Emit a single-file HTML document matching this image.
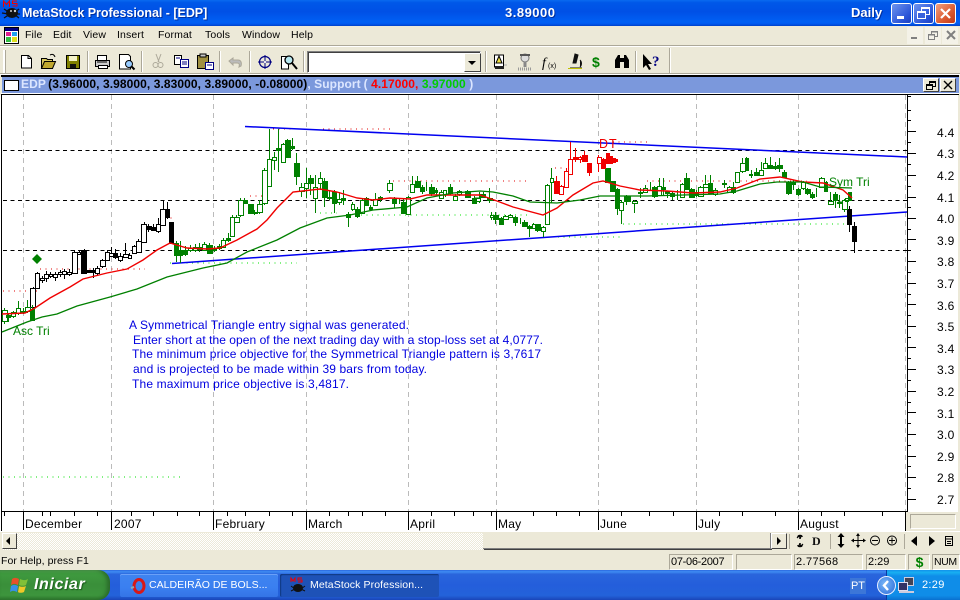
<!DOCTYPE html>
<html><head><meta charset="utf-8"><style>
html,body{margin:0;padding:0;width:960px;height:600px;overflow:hidden;background:#ece9d8;font-family:"Liberation Sans",sans-serif;font-size:11px;color:#000}
.a{position:absolute;white-space:nowrap}
.sep{position:absolute;top:51px;width:1px;height:21px;background:#aca899;border-right:1px solid #fff}
.pane{position:absolute;top:554px;height:14px;border:1px solid;border-color:#aca899 #fff #fff #aca899;line-height:14px;font-size:11px;padding-left:1px;box-sizing:content-box}
.m{position:absolute;top:29px;font-size:10.5px;line-height:13px;letter-spacing:.12px}
svg{position:absolute;overflow:visible}
.lbl{font:12px "Liberation Sans",sans-serif;fill:#000}
</style></head><body>

<!-- title bar -->
<div class="a" style="left:0;top:0;width:960px;height:26px;background:linear-gradient(180deg,#0a6af0 0,#0058e8 10%,#0050e6 45%,#0060f4 85%,#0058ee 92%,#0040c8 100%)"></div>
<svg style="left:2px;top:0" width="18" height="20" viewBox="0 0 18 20"><ellipse cx="10" cy="13" rx="6" ry="5" fill="#111"/><path d="M2 9l6 4M0 13l7 1M2 18l6-4M17 9l-5 4M18 14l-5 0M17 18l-5-4" stroke="#111" fill="none" stroke-width="1.300"/><path d="M1.500 7V1l3 3.500L7.500 1v6M15 1H10.500v2.500H15V6H10.500" stroke="#e00" fill="none"/><circle cx="13" cy="11" r="1.200" fill="#ccc"/><circle cx="9" cy="11" r="1" fill="#ccc"/></svg>
<div class="a" style="left:22px;top:5px;color:#fff;font:bold 12.500px/16px 'Liberation Sans',sans-serif;text-shadow:1px 1px 0 #0030a0;letter-spacing:-.03px">MetaStock Professional - [EDP]</div>
<div class="a" style="left:505px;top:5px;color:#fff;font:bold 13px/16px 'Liberation Sans',sans-serif;text-shadow:1px 1px 0 #0030a0;letter-spacing:.5px">3.89000</div>
<div class="a" style="left:851px;top:5px;color:#fff;font:bold 13px/16px 'Liberation Sans',sans-serif;text-shadow:1px 1px 0 #0030a0">Daily</div>
<div class="a" style="left:891px;top:3px;width:19px;height:19px;border:1px solid #fff;border-radius:3px;background:linear-gradient(135deg,#6f94ee,#2a55d8 70%,#1c3fc0)"><div class="a" style="left:5px;top:12px;width:7px;height:3px;background:#fff"></div></div>
<div class="a" style="left:913px;top:3px;width:19px;height:19px;border:1px solid #fff;border-radius:3px;background:linear-gradient(135deg,#6f94ee,#2a55d8 70%,#1c3fc0)"><div class="a" style="left:7px;top:3px;width:7px;height:5px;border:1px solid #fff;border-top-width:2px"></div><div class="a" style="left:3px;top:7px;width:7px;height:5px;border:1px solid #fff;border-top-width:2px;background:#3a62dc"></div></div>
<div class="a" style="left:935px;top:3px;width:19px;height:19px;border:1px solid #fff;border-radius:3px;background:linear-gradient(135deg,#f0a080,#dc5a30 60%,#c03818)"><svg style="left:4px;top:4px" width="11" height="11"><path d="M1 1l9 9M10 1l-9 9" stroke="#fff" stroke-width="2.200"/></svg></div>

<!-- menu -->
<svg style="left:4px;top:27px" width="15" height="17"><rect x=".5" y=".5" width="14" height="16" fill="#fff" stroke="#000"/><rect x="1" y="1" width="13" height="3" fill="#000080"/><rect x="2" y="5" width="5" height="4" fill="#e02090"/><rect x="8" y="5" width="5" height="4" fill="#20a0f0"/><rect x="2" y="10" width="5" height="5" fill="#30c040"/><rect x="8" y="10" width="5" height="5" fill="#e0e020"/></svg>
<div class="m" style="left:25px">File</div><div class="m" style="left:53px">Edit</div><div class="m" style="left:83px">View</div><div class="m" style="left:117px">Insert</div><div class="m" style="left:158px">Format</div><div class="m" style="left:205px">Tools</div><div class="m" style="left:242px">Window</div><div class="m" style="left:291px">Help</div>
<div class="a" style="left:907px;top:27px;width:16px;height:17px;background:#f4f2e8"></div><div class="a" style="left:925px;top:27px;width:16px;height:17px;background:#f4f2e8"></div><div class="a" style="left:942px;top:27px;width:16px;height:17px;background:#f4f2e8"></div>
<svg style="left:0;top:0" width="960" height="50" viewBox="0 0 960 50" fill="none" stroke="#808080" shape-rendering="crispEdges"><path d="M911 38h6" stroke-width="2"/><rect x="931.500" y="31.500" width="6" height="5"/><path d="M931 32h7"/><rect x="928.500" y="34.500" width="6" height="5" fill="#f4f2e8"/><path d="M928 35h7"/><path d="M947 31l8 8M955 31l-8 8" stroke-width="2" shape-rendering="auto"/></svg>
<div class="a" style="left:0;top:45px;width:960px;height:1px;background:#aca899"></div><div class="a" style="left:0;top:46px;width:960px;height:1px;background:#fff"></div>

<!-- toolbar -->
<div class="a" style="left:3px;top:50px;width:2px;height:23px;background:#fff;border-right:1px solid #aca899"></div>
<div class="sep" style="left:87px"></div><div class="sep" style="left:141px"></div><div class="sep" style="left:219px"></div><div class="sep" style="left:249px"></div><div class="sep" style="left:303px"></div><div class="sep" style="left:485px"></div><div class="sep" style="left:635px"></div><div class="a" style="left:669px;top:48px;width:1px;height:26px;background:#aca899;border-right:1px solid #fff"></div>
<svg style="left:0;top:47px" width="700" height="27" viewBox="0 47 700 27">
<path d="M21.500 55.500h7l3 3v9.500h-10z" fill="#fff" stroke="#000"/><path d="M28 55.500v3h3" fill="none" stroke="#000"/>
<path d="M41.500 68.500v-10h5l1 1h5v9z" fill="#d8c860" stroke="#000"/><path d="M41.500 68.500l3-7h11l-3 7z" fill="#c0a830" stroke="#000"/><path d="M50 55c2-1 4-1 5 2" fill="none" stroke="#000"/>
<rect x="66.500" y="55.500" width="13" height="13" fill="#808000" stroke="#000"/><rect x="69" y="56" width="8" height="5" fill="#f4f2c8"/><rect x="70" y="64" width="6" height="4" fill="#111"/>
<rect x="97.500" y="55.500" width="9" height="5" fill="#fff" stroke="#000"/><path d="M95.500 60.500h14v6h-14z" fill="#ccc" stroke="#000"/><rect x="98.500" y="65.500" width="9" height="3" fill="#fff" stroke="#000"/><path d="M97 62h10" stroke="#000"/>
<path d="M119.500 54.500h9l2 2v12.500h-11z" fill="#fff" stroke="#000"/><circle cx="129" cy="64" r="3.500" fill="#9cf" stroke="#000"/><path d="M131.500 66.500l3 3" stroke="#000" stroke-width="2"/>
<path d="M156 54l3 8M161 54l-3 8" stroke="#aca899"/><circle cx="155.500" cy="65" r="2.500" fill="none" stroke="#aca899"/><circle cx="160.500" cy="65" r="2.500" fill="none" stroke="#aca899"/>
<rect x="174.500" y="55.500" width="7" height="9" fill="#fff" stroke="#000"/><rect x="180.500" y="59.500" width="8" height="8" fill="#fff" stroke="#000080"/><path d="M182 62h5M182 64h5M176 58h4" stroke="#000080"/>
<rect x="197.500" y="55.500" width="11" height="13" fill="#a09040" stroke="#000"/><rect x="200" y="54" width="6" height="3" fill="#c8c8c8" stroke="#000"/><rect x="205.500" y="62.500" width="8" height="7" fill="#fff" stroke="#000080"/><path d="M207 65h5" stroke="#000080"/>
<path d="M229 61l4-3v2h5c3 0 4 3 3 6l-2 1c1-3 0-4-2-4h-4v2z" fill="#bbb" stroke="#aca899"/>
<circle cx="265" cy="62" r="5.500" fill="none" stroke="#000080" stroke-width="1.200"/><path d="M265 55v14M258 62h14" stroke="#000080"/><circle cx="265" cy="62" r="1" fill="#fff"/>
<path d="M281.500 56.500h7v12.500h-7z" fill="#fff" stroke="#000"/><circle cx="289" cy="60" r="4" fill="#b8e8f0" stroke="#000" stroke-width="1.300"/><path d="M292 63l5 6" stroke="#000" stroke-width="2"/>
<path d="M494.500 55h9v12h-9z" fill="#fff" stroke="#000"/><path d="M499 56l-3 7h6z" fill="#f0e040" stroke="#000"/><path d="M495 66h9v3h-9z" fill="#222"/><path d="M504 65h3" stroke="#aaa"/>
<circle cx="525" cy="58" r="4" fill="#ddd" stroke="#777"/><path d="M520 55h10" stroke="#555" stroke-width="2"/><path d="M518 69h14" stroke="#999" stroke-width="3" stroke-dasharray="1 1"/><path d="M525 62v5" stroke="#888" stroke-width="3"/>
<text x="542" y="67" font-family="Liberation Serif" font-style="italic" font-size="14">f</text><text x="548" y="68" font-family="Liberation Sans" font-size="7">(x)</text>
<path d="M570 68h12M575 54l3 1-2 8h-3zM580 60c2 2 2 5 0 7" fill="#111" stroke="#111"/><path d="M568 68.500h14" stroke="#c0c000" stroke-width="1"/>
<text x="592" y="67" font-family="Liberation Sans" font-weight="bold" font-size="14" fill="#008000">$</text>
<path d="M615 68v-8l3-5h2v13zM624 68v-13h2l3 5v8z" fill="#000"/><rect x="620" y="58" width="4" height="4" fill="#000"/>
<path d="M643 54v14l3-3 3 5 2-1-3-5h4z" fill="#000"/><text x="652" y="66" font-family="Liberation Serif" font-weight="bold" font-size="15" fill="#000080">?</text>
</svg>
<div class="a" style="left:307px;top:51px;width:172px;height:20px;background:#fff;border:1px solid;border-color:#808080 #fff #fff #808080;box-shadow:inset 1px 1px 0 #404040"></div>
<div class="a" style="left:464px;top:53px;width:15px;height:17px;background:#ece9d8;border:1px solid;border-color:#fff #404040 #404040 #fff"><div class="a" style="left:3px;top:7px;border:4px solid transparent;border-top:4px solid #000;border-bottom:0"></div></div>
<div class="a" style="left:0;top:73px;width:960px;height:1px;background:#aca899"></div>

<!-- child caption -->
<div class="a" style="left:0;top:74px;width:960px;height:1px;background:#fff"></div>
<div class="a" style="left:1px;top:75px;width:958px;height:2px;background:#000"></div>
<div class="a" style="left:2px;top:77px;width:957px;height:16px;background:#7b98dc"></div>
<div class="a" style="left:1px;top:93px;width:958px;height:2px;background:#000;border-top:1px solid #fff;box-sizing:border-box"></div>
<div class="a" style="left:4px;top:80px;width:13px;height:9px;border:1px solid #000;background:#fff"></div>
<div class="a" style="left:21px;top:77px;font:bold 12px/15px 'Liberation Sans',sans-serif;color:#dce6ff;letter-spacing:.08px">EDP <span style="color:#000;margin-left:-1px">(3.96000, 3.98000, 3.83000, 3.89000, -0.08000)</span>, Support&nbsp; <span style="margin-left:-4px">(</span><span style="color:#f00"> 4.17000,</span> <span style="color:#0c0">3.97000</span> )</div>
<div class="a" style="left:923px;top:78px;width:14px;height:12px;background:#ece9d8;border:1px solid;border-color:#fff #404040 #404040 #fff"><div class="a" style="left:5px;top:2px;width:5px;height:3px;border:1px solid #000;border-top-width:2px"></div><div class="a" style="left:2px;top:5px;width:5px;height:3px;border:1px solid #000;border-top-width:2px;background:#ece9d8"></div></div>
<div class="a" style="left:940px;top:78px;width:14px;height:12px;background:#ece9d8;border:1px solid;border-color:#fff #404040 #404040 #fff"><svg style="left:3px;top:2px" width="9" height="8"><path d="M0 0l8 8M8 0l-8 8" stroke="#000" stroke-width="1.400"/></svg></div>

<!-- chart -->
<div class="a" style="left:0;top:95px;width:958px;height:436px;background:#fff"></div>
<!-- small box lower right -->
<div class="a" style="left:906px;top:512px;width:54px;height:20px;background:#ece9d8"></div>
<div class="a" style="left:910px;top:514px;width:44px;height:13px;background:#ece9d8;border:1px solid;border-color:#aca899 #fff #fff #aca899"></div>
<svg style="left:0;top:0" width="960" height="600" viewBox="0 0 960 600">
<path d="M1.500 95V531M907.500 95V512M1 511.500H908M905.500 512V531" stroke="#000" fill="none" stroke-width="1.200" shape-rendering="crispEdges"/>
<path d="M23.500 95V511M111.500 95V511M213.500 95V511M306.500 95V511M408.500 95V511M496.500 95V511M598.500 95V511M696.500 95V511M798.500 95V511M905.500 95V511" stroke="#bbb" stroke-dasharray="5 4" shape-rendering="crispEdges"/>
<path d="M3 150.500H907M3 200.500H907M3 250.500H907" stroke="#000" stroke-dasharray="4 3.500" shape-rendering="crispEdges"/>
<path d="M23.500 512V530M111.500 512V530M213.500 512V530M306.500 512V530M408.500 512V530M496.500 512V530M598.500 512V530M696.500 512V530M798.500 512V530" stroke="#000" shape-rendering="crispEdges"/>
<path d="M4.500 512V516M42.500 512V516M50.500 512V516M74.500 512V516M97.500 512V516M131.500 512V516M153.500 512V516M177.500 512V516M199.500 512V516M227.500 512V516M245.500 512V516M269.500 512V516M292.500 512V516M329.500 512V516M348.500 512V516M362.500 512V516M385.500 512V516M431.500 512V516M454.500 512V516M473.500 512V516M491.500 512V516M533.500 512V516M556.500 512V516M579.500 512V516M621.500 512V516M649.500 512V516M673.500 512V516M719.500 512V516M742.500 512V516M775.500 512V516M821.500 512V516M844.500 512V516M882.500 512V516" stroke="#000" shape-rendering="crispEdges"/>
<!-- y ticks -->
<path d="M907 131.500h9M907 153.500h9M907 175.500h9M907 197.500h9M907 218.500h9M907 239.500h9M907 261.500h9M907 283.500h9M907 304.500h9M907 326.500h9M907 347.500h9M907 369.500h9M907 391.500h9M907 412.500h9M907 434.500h9M907 456.500h9M907 477.500h9M907 499.500h9M907 96.500h4M907 110.500h4M907 120.500h4M907 142.500h4M907 164.500h4M907 186.500h4M907 207.500h4M907 229.500h4M907 250.500h4M907 272.500h4M907 294.500h4M907 315.500h4M907 337.500h4M907 358.500h4M907 380.500h4M907 402.500h4M907 423.500h4M907 445.500h4M907 466.500h4M907 488.500h4" stroke="#000" shape-rendering="crispEdges"/>
<g class="lbl" font-size="12" style="letter-spacing:.3px"><text x="937" y="137">4.4</text><text x="937" y="158">4.3</text><text x="937" y="180">4.2</text><text x="937" y="202">4.1</text><text x="937" y="223">4.0</text><text x="937" y="245">3.9</text><text x="937" y="266">3.8</text><text x="937" y="288">3.7</text><text x="937" y="310">3.6</text><text x="937" y="331">3.5</text><text x="937" y="353">3.4</text><text x="937" y="374">3.3</text><text x="937" y="396">3.2</text><text x="937" y="418">3.1</text><text x="937" y="439">3.0</text><text x="937" y="461">2.9</text><text x="937" y="482">2.8</text><text x="937" y="504">2.7</text></g>
<g class="lbl" style="letter-spacing:.25px"><text x="25" y="528">December</text><text x="114" y="528">2007</text><text x="215" y="528">February</text><text x="308" y="528">March</text><text x="410" y="528">April</text><text x="498" y="528">May</text><text x="600" y="528">June</text><text x="698" y="528">July</text><text x="800" y="528">August</text></g>
<!-- dotted -->
<g stroke-dasharray="1 4.500" fill="none" stroke-width="1" shape-rendering="crispEdges">
<path stroke="#e00000" d="M3 291H38M40 269H145M165 218H176M250 196H270M273 129H297M323 129H390M393 181H530M555 168H565M570 142H587M613 142H647M647 181H807"/>
<path stroke="#00e000" d="M170 263H297M320 213H337M350 215H530M547 237H623M623 224H850M3 477H183"/>
</g>
<!-- blue trend -->
<path d="M245 126.500L907 157" fill="none" stroke="#0000f0" stroke-width="1.500"/>
<path d="M172 263.500L907 212" fill="none" stroke="#0000f0" stroke-width="1.500"/>
<!-- black candles -->
<g fill="#fff" stroke="#000" shape-rendering="crispEdges">
<path fill="none" d="M33.500 287V308M37.500 272V289M42.500 276V283M46.500 271V282M50.500 272V278M55.500 272V281M60.500 270V277M64.500 269V279M69.500 269V276M74.500 250V274M79.500 250V255M84.500 249V274M93.500 268V278M97.500 266V276M102.500 259V268M107.500 250V261M111.500 247V257M115.500 249V259M120.500 253V262M125.500 243V258M129.500 253V259M134.500 245V253M138.500 239V252M144.500 222V243M148.500 224V232M153.500 224V231M158.500 218V233M163.500 200V226M167.500 202V219M171.500 222V243M849.500 206V232M854.500 222V253"/>
<path d="M30.500 288.500h5v19h-5zM35.500 273.500h4v15h-4zM40.500 278.500h4v2h-4zM44.500 274.500h4v4h-4zM49.500 274.500h3v2h-3zM53.500 274.500h4v3h-4zM58.500 272.500h4v2h-4zM62.500 271.500h4v3h-4zM67.500 272.500h4v2h-4zM72.500 252.500h5v21h-5zM77.500 252.500h3v2h-3zM95.500 268.500h4v5h-4zM100.500 260.500h5v6h-5zM105.500 252.500h4v8h-4zM109.500 253.500h4v3h-4zM118.500 256.500h4v4h-4zM123.500 254.500h5v3h-5zM128.500 255.500h3v3h-3zM132.500 246.500h4v7h-4zM136.500 241.500h5v11h-5zM141.500 224.500h5v18h-5zM156.500 224.500h4v7h-4zM160.500 209.500h5v16h-5z"/>
<path fill="#000" d="M81.500 250.500h5v23h-5zM86.500 270.500h5v2h-5zM91.500 270.500h4v2h-4zM113.500 253.500h4v4h-4zM146.500 226.500h5v3h-5zM151.500 227.500h4v3h-4zM165.500 209.500h4v8h-4zM169.500 222.500h4v21h-4zM847.500 209.500h4v15h-4zM852.500 226.500h4v15h-4z"/>
</g>
<!-- green candles -->
<g fill="#fff" stroke="#008000" shape-rendering="crispEdges">
<path fill="none" d="M4.500 308V324M8.500 314V322M13.500 311V318M18.500 301V315M23.500 308V314M27.500 300V313M32.500 305V320M176.500 241V262M180.500 241V263M185.500 246V256M190.500 245V252M195.500 244V252M199.500 243V252M204.500 242V251M209.500 243V254M214.500 246V252M219.500 244V250M223.500 238V248M228.500 233V242M232.500 215V237M236.500 215V223M240.500 198V217M244.500 198V204M249.500 204V214M254.500 210V215M259.500 200V214M264.500 168V205M269.500 129V187M274.500 152V170M278.500 129V172M283.500 143V163M287.500 139V158M292.500 138V150M296.500 153V185M301.500 183V197M306.500 168V198M310.500 175V195M315.500 175V213M320.500 172V190M324.500 178V207M329.500 190V200M334.500 190V213M339.500 192V205M343.500 190V205M348.500 212V227M352.500 202V211M357.500 207V218M362.500 198V214M366.500 197V206M370.500 205V211M375.500 193V206M380.500 196V202M389.500 180V193M394.500 197V208M399.500 198V204M403.500 198V214M408.500 196V215M412.500 176V193M417.500 176V188M422.500 185V194M426.500 182V191M431.500 184V196M436.500 188V195M441.500 190V199M445.500 190V197M450.500 184V195M455.500 194V201M459.500 190V196M467.500 190V198M474.500 196V204M479.500 192V203M483.500 192V197M489.500 188V203M491.500 212V220M495.500 212V224M501.500 217V225M505.500 215V220M510.500 214V218M515.500 216V226M520.500 218V224M524.500 220V227M529.500 225V237M533.500 223V229M537.500 224V232M543.500 226V237M547.500 184V225M551.500 168V203M607.500 168V183M612.500 181V192M617.500 188V215M621.500 200V224M626.500 195V205M630.500 196V202M634.500 200V213M640.500 188V198M645.500 185V193M650.500 182V190M654.500 186V198M659.500 178V196M663.500 178V195M667.500 191V198M672.500 192V200M677.500 190V200M682.500 183V198M686.500 173V190M691.500 188V198M696.500 190V197M700.500 186V197M705.500 175V188M710.500 175V194M715.500 188V196M724.500 180V188M729.500 186V193M733.500 182V194M737.500 172V183M742.500 158V173M746.500 157V171M751.500 170V178M756.500 168V176M761.500 162V176M765.500 158V169M770.500 157V169M775.500 162V170M779.500 158V172M784.500 170V178M788.500 181V195M793.500 180V190M798.500 188V196M803.500 181V190M807.500 188V195M812.500 192V199M816.500 188V197M821.500 177V188M826.500 181V192M830.500 192V205M835.500 192V208M839.500 195V208M844.500 199V212M848.500 193V201"/>
<path d="M2.500 310.500h5v11h-5zM11.500 312.500h4v4h-4zM16.500 308.500h4v5h-4zM25.500 307.500h5v4h-5zM188.500 248.500h4v2h-4zM193.500 247.500h4v3h-4zM202.500 244.500h4v6h-4zM221.500 240.500h4v7h-4zM230.500 217.500h4v19h-4zM234.500 217.500h5v5h-5zM238.500 200.500h5v15h-5zM257.500 204.500h5v8h-5zM262.500 170.500h5v33h-5zM267.500 159.500h4v27h-4zM272.500 157.500h4v3h-4zM281.500 144.500h4v18h-4zM299.500 187.500h5v4h-5zM304.500 183.500h4v5h-4zM313.500 187.500h4v11h-4zM318.500 178.500h4v5h-4zM337.500 199.500h4v3h-4zM351.500 204.500h3v5h-3zM360.500 200.500h4v13h-4zM373.500 199.500h4v6h-4zM387.500 183.500h5v7h-5zM406.500 197.500h4v17h-4zM410.500 184.500h4v8h-4zM439.500 192.500h4v6h-4zM443.500 190.500h3v4h-3zM453.500 196.500h4v4h-4zM457.500 191.500h4v3h-4zM476.500 198.500h4v3h-4zM490.500 215.500h3v2h-3zM503.500 216.500h5v3h-5zM508.500 215.500h4v2h-4zM532.500 224.500h3v4h-3zM541.500 227.500h4v4h-4zM545.500 185.500h4v39h-4zM550.500 178.500h3v4h-3zM619.500 202.500h4v8h-4zM632.500 201.500h5v2h-5zM643.500 188.500h4v4h-4zM657.500 186.500h4v9h-4zM680.500 184.500h4v13h-4zM698.500 187.500h5v9h-5zM703.500 184.500h5v3h-5zM713.500 190.500h4v4h-4zM727.500 187.500h4v5h-4zM735.500 172.500h4v10h-4zM740.500 163.500h5v8h-5zM759.500 170.500h4v5h-4zM763.500 163.500h4v5h-4zM801.500 182.500h4v6h-4zM819.500 178.500h5v9h-5zM828.500 201.500h5v3h-5zM842.500 200.500h5v9h-5zM845.500 198.500h3v3h-3z"/>
<path fill="#008000" d="M6.500 315.500h4v2h-4zM21.500 311.500h4v1h-4zM30.500 309.500h4v11h-4zM174.500 243.500h4v12h-4zM178.500 250.500h4v5h-4zM183.500 250.500h4v4h-4zM197.500 247.500h4v2h-4zM207.500 245.500h5v8h-5zM212.500 248.500h4v2h-4zM217.500 246.500h4v2h-4zM226.500 238.500h4v2h-4zM243.500 200.500h4v3h-4zM248.500 204.500h5v9h-5zM253.500 212.500h4v1h-4zM276.500 148.500h4v2h-4zM285.500 140.500h5v17h-5zM290.500 146.500h4v2h-4zM294.500 163.500h5v13h-5zM308.500 178.500h5v5h-5zM322.500 181.500h5v16h-5zM327.500 197.500h4v1h-4zM332.500 192.500h4v11h-4zM341.500 198.500h4v2h-4zM346.500 214.500h4v3h-4zM355.500 209.500h4v7h-4zM364.500 198.500h4v7h-4zM369.500 207.500h3v2h-3zM378.500 197.500h4v2h-4zM392.500 199.500h4v4h-4zM401.500 202.500h5v11h-5zM415.500 181.500h5v6h-5zM420.500 187.500h4v4h-4zM429.500 187.500h5v6h-5zM434.500 190.500h3v2h-3zM448.500 187.500h4v6h-4zM465.500 191.500h5v6h-5zM472.500 198.500h4v5h-4zM480.500 194.500h5v3h-5zM487.500 198.500h5v2h-5zM493.500 215.500h5v4h-5zM499.500 218.500h4v6h-4zM513.500 217.500h4v5h-4zM522.500 222.500h5v4h-5zM527.500 226.500h5v2h-5zM535.500 224.500h5v6h-5zM605.500 168.500h5v14h-5zM610.500 181.500h5v10h-5zM615.500 189.500h4v19h-4zM624.500 196.500h5v5h-5zM638.500 192.500h4v1h-4zM652.500 187.500h5v9h-5zM661.500 187.500h4v2h-4zM665.500 191.500h4v2h-4zM670.500 193.500h4v3h-4zM684.500 178.500h5v11h-5zM689.500 189.500h5v8h-5zM694.500 192.500h3v3h-3zM708.500 183.500h4v10h-4zM722.500 183.500h4v1h-4zM731.500 187.500h4v5h-4zM745.500 158.500h3v12h-3zM749.500 174.500h3v1h-3zM754.500 172.500h5v3h-5zM768.500 165.500h4v3h-4zM773.500 166.500h4v2h-4zM777.500 165.500h5v3h-5zM782.500 172.500h4v5h-4zM786.500 182.500h5v11h-5zM791.500 182.500h4v2h-4zM796.500 189.500h4v5h-4zM805.500 189.500h5v4h-5zM810.500 194.500h4v3h-4zM824.500 182.500h3v9h-3zM833.500 194.500h4v6h-4zM837.500 202.500h4v1h-4zM848.500 192.500h3v8h-3z"/>
<path fill="none" d="M820 187h13M838 202h4M474 198h6"/>
</g>
<!-- red candles -->
<g fill="#fff" stroke="#f00000" shape-rendering="crispEdges">
<path fill="none" d="M556.500 176V194M561.500 185V195M566.500 168V188M570.500 142V175M575.500 148V162M580.500 156V163M584.500 151V162M589.500 163V176M598.500 155V172M603.500 158V169M607.500 153V164"/>
<path d="M559.500 186.500h4v8h-4zM564.500 171.500h4v16h-4zM568.500 159.500h4v15h-4zM578.500 157.500h3v2h-3zM597.500 157.500h4v6h-4z"/>
<path fill="#f00000" d="M554.500 181.500h5v12h-5zM573.500 157.500h4v2h-4zM582.500 155.500h5v6h-5zM587.500 163.500h4v9h-4zM601.500 159.500h4v9h-4zM606.500 153.500h3v10h-3zM609.500 156.500h3v7h-3zM612.500 158.500h3v4h-3zM615.500 159.500h2v2h-2z"/>
</g>
<!-- MAs -->
<polyline fill="none" stroke="#f00000" stroke-width="1.400" points="2,314 25,313 35,308 50,298 70,287 83,279 107,273 127,269 143,260 157,250 170,243 187,248 207,249 220,248 237,240 257,229 267,220 277,208 293,192 320,189 337,192 357,198 373,200 390,198 410,199 427,195 453,195 480,195 497,201 513,207 543,215 557,208 573,195 593,183 603,181 620,186 640,190 667,191 693,193 720,192 737,188 760,179 780,177 803,182 823,183 843,190 852,198"/>
<polyline fill="none" stroke="#008000" stroke-width="1.300" points="2,332 27,322 42,317 57,314 77,306 110,297 137,289 167,277 203,268 227,263 247,252 277,240 300,228 327,218 350,215 373,210 407,207 427,198 453,193 480,191 493,192 513,196 530,202 557,203 580,200 600,196 647,196 720,194 737,191 760,184 777,182 803,182 820,187 852,188"/>
<!-- markers -->
<path d="M37 254l5 5-5 5-5-5z" fill="#008000"/>
<text x="13" y="335" font-family="Liberation Sans" font-size="12" fill="#008000">Asc Tri</text>
<text x="829" y="186" font-family="Liberation Sans" font-size="12" fill="#008000">Sym Tri</text>
<text x="599" y="148" font-family="Liberation Sans" font-size="12.500" fill="#f00000" letter-spacing="1">DT</text>
<g font-family="Liberation Sans" font-size="12" fill="#0000e0">
<text x="129" y="329" textLength="280" lengthAdjust="spacing">A Symmetrical Triangle entry signal was generated.</text>
<text x="133" y="344" textLength="410" lengthAdjust="spacing">Enter short at the open of the next trading day with a stop-loss set at 4,0777.</text>
<text x="132" y="358" textLength="409" lengthAdjust="spacing">The minimum price objective for the Symmetrical Triangle pattern is 3,7617</text>
<text x="133" y="373" textLength="294" lengthAdjust="spacing">and is projected to be made within 39 bars from today.</text>
<text x="132" y="388" textLength="217" lengthAdjust="spacing">The maximum price objective is 3,4817.</text>
</g>
</svg>

<!-- scrollbar row -->
<div class="a" style="left:0;top:531px;width:960px;height:19px;background:#ece9d8;border-top:1px solid #fff;box-sizing:border-box"></div>
<div class="a" style="left:3px;top:533px;width:480px;height:17px;background:#f6f5ef;background-image:repeating-conic-gradient(#ece9d8 0 25%,#fff 0 50%);background-size:2px 2px"></div>
<div class="a" style="left:2px;top:533px;width:13px;height:14px;background:#ece9d8;border:1px solid;border-color:#fff #404040 #404040 #fff"><div class="a" style="left:3px;top:3px;border:4px solid transparent;border-right:4px solid #000;border-left:0"></div></div>
<div class="a" style="left:483px;top:533px;width:287px;height:15px;background:#ece9d8;border-bottom:1px solid #808080;border-right:1px solid #808080;box-shadow:1px 1px 0 #404040"></div>
<div class="a" style="left:771px;top:533px;width:14px;height:14px;background:#ece9d8;border:1px solid;border-color:#fff #404040 #404040 #fff"><div class="a" style="left:5px;top:3px;border:4px solid transparent;border-left:4px solid #000;border-right:0"></div></div>
<div class="a" style="left:789px;top:534px;width:1px;height:15px;background:#aca899"></div><div class="a" style="left:830px;top:534px;width:1px;height:15px;background:#aca899"></div><div class="a" style="left:904px;top:534px;width:1px;height:15px;background:#aca899"></div>
<svg style="left:0;top:0" width="960" height="600" viewBox="0 0 960 600" fill="none" stroke="#000">
<path d="M798 537c0-2 4-2 4 0M798 545c0 2 4 2 4 0M800 536v3M800 546v-3" stroke-width="1.500"/><path d="M797 538l2-2 2 2M799 544l2 2 2-2" stroke-width="1.200"/>
<text x="812" y="545" font-family="Liberation Serif" font-weight="bold" font-size="12" fill="#111" stroke="none">D</text>
<path d="M841 533l-3.500 4h7zM841 548l-3.500-4h7z" fill="#000" stroke="none"/><path d="M841 536v9" stroke-width="2"/>
<path d="M858 534v13M852 540.500h13"/><path d="M858 533l-2 3h4zM858 548l-2-3h4zM851 540.500l3-2v4zM866 540.500l-3-2v4z" fill="#000" stroke="none"/>
<circle cx="875" cy="540.500" r="4.500"/><path d="M872 540.500h6"/>
<circle cx="892" cy="540.500" r="4.500"/><path d="M889 540.500h6M892 537.500v6"/>
<path d="M917 536v10l-6-5zM929 536v10l6-5z" fill="#000" stroke="none"/>
<rect x="945.500" y="536.500" width="7" height="9"/><path d="M945 539h8M947 541.500h4M947 543.500h4"/>
</svg>

<!-- status -->
<div class="a" style="left:1px;top:553px;font-size:10.500px;line-height:17px;letter-spacing:.05px">For Help, press F1</div>
<div class="pane" style="left:669px;width:61px;letter-spacing:-.3px">07-06-2007</div>
<div class="pane" style="left:736px;width:53px"></div>
<div class="pane" style="left:794px;width:66px;letter-spacing:.4px">2.77568</div>
<div class="pane" style="left:866px;width:37px">2:29</div>
<div class="pane" style="left:908px;width:19px;color:#008000;font-weight:bold;font-size:14px;text-align:center">$</div>
<div class="pane" style="left:932px;width:25px;font-size:10.500px;letter-spacing:-.4px">NUM</div>

<!-- taskbar -->
<div class="a" style="left:0;top:570px;width:960px;height:30px;background:linear-gradient(180deg,#2a68e0 0,#3f8cf3 6%,#2a65dc 14%,#245edb 50%,#2362da 85%,#1a45b8 100%)"></div>
<div class="a" style="left:0;top:570px;width:110px;height:30px;border-radius:0 12px 12px 0;background:linear-gradient(180deg,#5aa85a 0,#3f9b3f 10%,#3a8f3a 50%,#3d953d 85%,#2e7a2e 100%);box-shadow:inset -3px 0 4px #2a6a2a"></div>
<svg style="left:11px;top:576px" width="19" height="19"><path d="M1 3c3-2 5-1 7 0l-1 6c-2-1-4-2-7 0z" fill="#e85028"/><path d="M9 3c2 1 5 2 8 0l-2 6c-2 1-5 1-7 0z" fill="#80c038"/><path d="M0 10c3-2 5-1 7 0l-1 6c-2-1-4-2-7 0z" fill="#3890e8"/><path d="M8 10c2 1 5 1 7 0l-2 6c-2 1-5 1-6 0z" fill="#f0c828"/></svg>
<div class="a" style="left:34px;top:575px;color:#fff;font:italic bold 16px/20px 'Liberation Sans',sans-serif;letter-spacing:.6px;text-shadow:1px 1px 1px #1a5a1a">Iniciar</div>
<div class="a" style="left:120px;top:574px;width:158px;height:23px;background:linear-gradient(180deg,#3f84f0,#3a7ff0 60%,#3474e6);border-radius:2px;box-shadow:inset 0 1px 0 #6aa0f8"></div>
<div class="a" style="left:280px;top:574px;width:159px;height:23px;background:#1e52b7;border-radius:2px;box-shadow:inset 1px 1px 1px #103880"></div>
<svg style="left:131px;top:578px" width="16" height="16"><ellipse cx="8" cy="8" rx="5" ry="6.500" fill="none" stroke="#d81818" stroke-width="3"/><path d="M0 10l3-1" stroke="#8ab" stroke-width="2"/></svg>
<svg style="left:290px;top:578px" width="16" height="16"><ellipse cx="8" cy="10" rx="5" ry="4" fill="#111"/><path d="M1 8l4 3M1 13l4-2M15 8l-4 3M15 13l-4-2" stroke="#111"/><path d="M1 4V0l2 3 2-3v4M12 0H8v2h4v2H8" stroke="#e00" fill="none"/></svg>
<div class="a" style="left:149px;top:578px;color:#fff;font-size:10.500px;line-height:15px;letter-spacing:.03px">CALDEIRÃO DE BOLS...</div>
<div class="a" style="left:310px;top:578px;color:#fff;font-size:10.500px;line-height:15px;letter-spacing:.1px">MetaStock Profession...</div>
<div class="a" style="left:850px;top:578px;width:16px;height:16px;background:#3c76d8;color:#fff;font-size:11px;line-height:16px;text-align:center">PT</div>
<div class="a" style="left:886px;top:570px;width:74px;height:30px;background:linear-gradient(180deg,#1290ea 0,#18b0f2 8%,#0f8de8 20%,#0f8de8 85%,#0a70d0 100%);border-left:1px solid #0c3aa0;box-sizing:border-box"></div>
<div class="a" style="left:877px;top:576px;width:17px;height:17px;border-radius:50%;background:radial-gradient(circle at 40% 40%,#7ab8f8,#2868d8);border:1px solid #e8f0ff"></div>
<svg style="left:877px;top:576px" width="19" height="19"><path d="M11 5l-4 4.500 4 4.500" fill="none" stroke="#fff" stroke-width="2.400"/></svg>
<svg style="left:896px;top:577px" width="20" height="18"><rect x="8.500" y=".5" width="9" height="8" fill="#445" stroke="#ccd"/><rect x="2.500" y="5.500" width="9" height="8" fill="#336" stroke="#dde"/><path d="M3 15h8M9 15h9" stroke="#ccd" stroke-width="2"/></svg>
<div class="a" style="left:922px;top:578px;color:#fff;font-size:11px;line-height:15px;letter-spacing:.3px">2:29</div>
</body></html>
